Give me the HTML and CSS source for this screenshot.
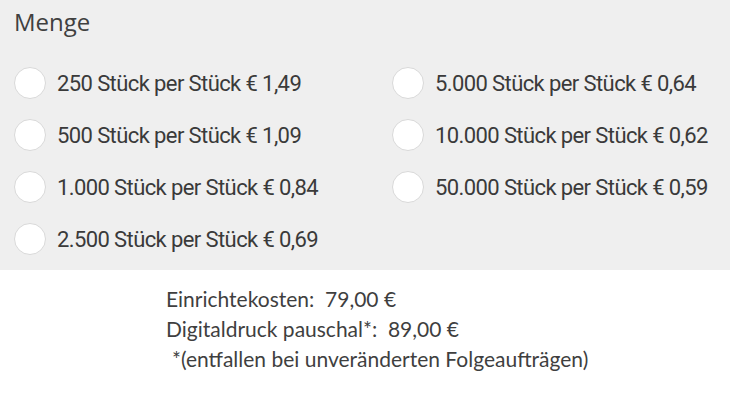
FILE: index.html
```html
<!DOCTYPE html>
<html lang="de">
<head>
<meta charset="utf-8">
<link rel="stylesheet" href="styles.css">
</head>
<body>
<section class="panel">
  <div class="title">Menge</div>
  <div class="options">
    <div class="col">
      <label class="opt"><span class="radio"></span><span class="lbl">250 Stück per Stück € 1,49</span></label>
      <label class="opt"><span class="radio"></span><span class="lbl">500 Stück per Stück € 1,09</span></label>
      <label class="opt"><span class="radio"></span><span class="lbl">1.000 Stück per Stück € 0,84</span></label>
      <label class="opt"><span class="radio"></span><span class="lbl">2.500 Stück per Stück € 0,69</span></label>
    </div>
    <div class="col">
      <label class="opt"><span class="radio"></span><span class="lbl">5.000 Stück per Stück € 0,64</span></label>
      <label class="opt"><span class="radio"></span><span class="lbl">10.000 Stück per Stück € 0,62</span></label>
      <label class="opt"><span class="radio"></span><span class="lbl">50.000 Stück per Stück € 0,59</span></label>
    </div>
  </div>
</section>
<section class="costs">
  <div class="line">Einrichtekosten:&nbsp; 79,00 €</div>
  <div class="line">Digitaldruck pauschal*:&nbsp; 89,00 €</div>
  <div class="line note">*(entfallen bei unveränderten Folgeaufträgen)</div>
</section>
</body>
</html>
```
FILE: styles.css
```css
html, body {
  margin: 0;
  padding: 0;
  background: #ffffff;
}
body {
  width: 730px;
  height: 404px;
  overflow: hidden;
  color: #404040;
}
.panel {
  background: #efefef;
  height: 270px;
  box-sizing: border-box;
  padding: 7px 0 0 14px;
}
.title {
  font-family: "Open Sans", sans-serif;
  font-size: 24px;
  line-height: 30px;
  margin-bottom: 20px;
  color: #404040;
}
.options {
  display: grid;
  grid-template-columns: 378px 1fr;
}
.col {
  display: flex;
  flex-direction: column;
}
.opt {
  display: flex;
  align-items: center;
  height: 52px;
  gap: 11px;
}
.radio {
  width: 30px;
  height: 30px;
  border-radius: 50%;
  background: #ffffff;
  border: 1px solid #d9d9d9;
  flex: none;
}
.lbl {
  font-family: "Roboto", sans-serif;
  font-size: 22px;
  letter-spacing: -0.6px;
  color: #3a3a3a;
}
.costs {
  padding: 14px 0 0 166px;
  font-family: "Lato", sans-serif;
  font-size: 21px;
  color: #3f3f3f;
}
.line {
  line-height: 30px;
}
.note {
  padding-left: 6px;
}
```
